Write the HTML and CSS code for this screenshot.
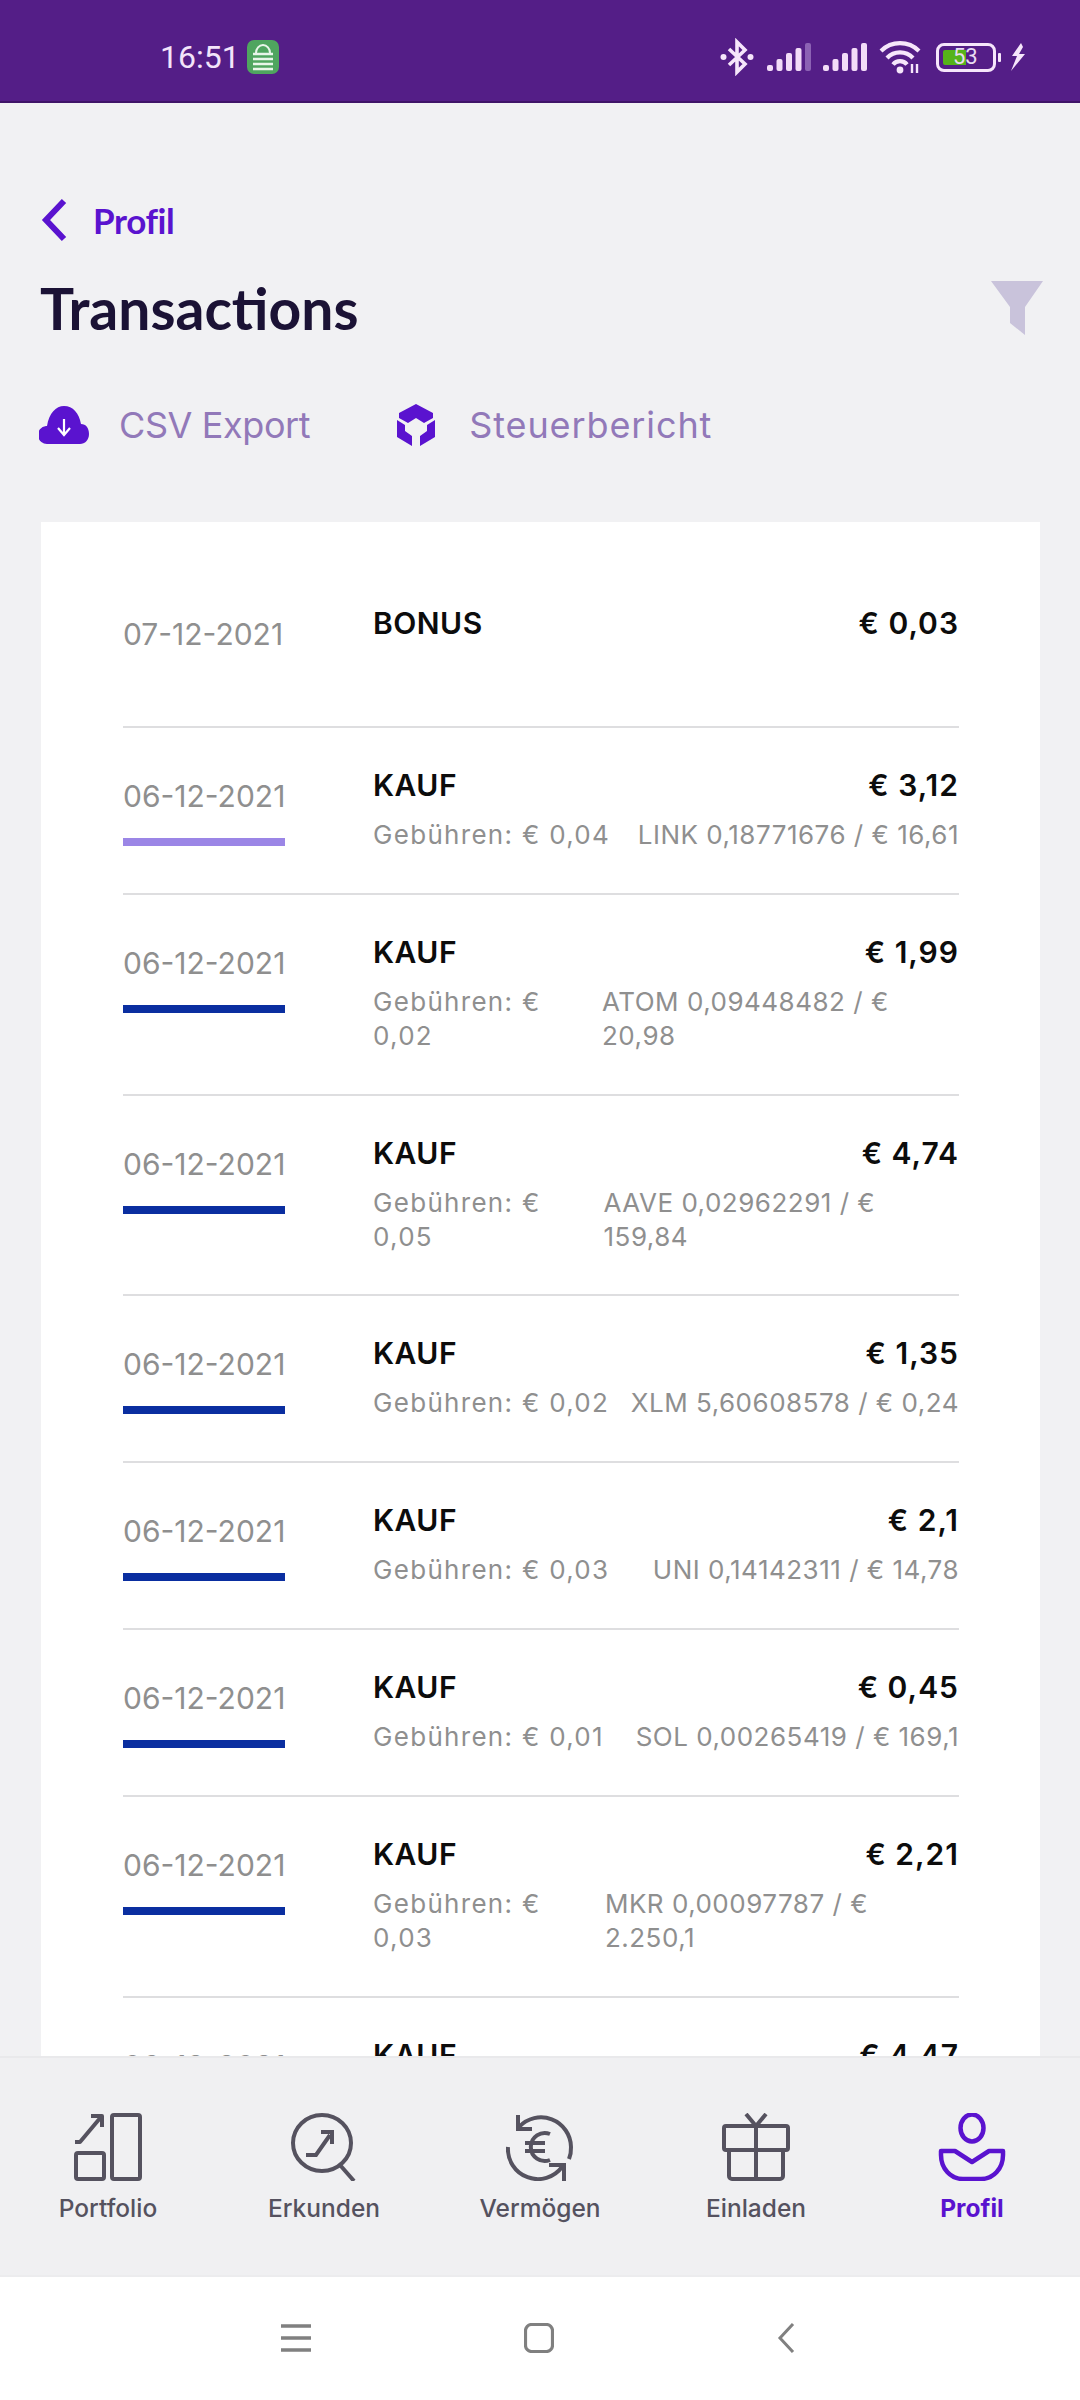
FILE: index.html
```html
<!DOCTYPE html>
<html lang="de">
<head>
<meta charset="utf-8">
<title>Transactions</title>
<link rel="stylesheet" href="styles.css">
</head>
<body>
<div class="phone">
  <header class="status">
    <div class="status-left">
      <span class="time">16:51</span>
      <svg class="vpn" viewBox="0 0 32 34"><rect width="32" height="34" rx="7" fill="#4fa55f"/><path d="M9 13a7 8 0 0 1 14 0" fill="none" stroke="#e8f5e9" stroke-width="2"/><path d="M6 14h20M6 19h20M6 24h20M6 29h20" stroke="#e8f5e9" stroke-width="2.6"/></svg>
    </div>
    <div class="status-right">
      <svg class="s-bt" viewBox="0 0 34 38"><path d="M9 11l16 15-8 8V4l8 8L9 27" fill="none" stroke="#f6e6fb" stroke-width="3.6"/><circle cx="3.5" cy="19" r="3" fill="#f6e6fb"/><circle cx="30.5" cy="19" r="3" fill="#f6e6fb"/></svg>
      <svg class="s-sig" viewBox="0 0 44 28"><g fill="#f3dcf8"><rect x="0" y="22" width="6" height="6" rx="2"/><rect x="9.500" y="16" width="6" height="12" rx="2"/><rect x="19" y="10" width="6" height="18" rx="2"/><rect x="28.500" y="5" width="6" height="23" rx="2"/><rect x="38" y="0" width="6" height="28" rx="2" fill="#8c62b4"/></g></svg>
      <svg class="s-sig" viewBox="0 0 44 28"><g fill="#f3dcf8"><rect x="0" y="22" width="6" height="6" rx="2"/><rect x="9.500" y="16" width="6" height="12" rx="2"/><rect x="19" y="10" width="6" height="18" rx="2"/><rect x="28.500" y="5" width="6" height="23" rx="2"/><rect x="38" y="0" width="6" height="28" rx="2"/></g></svg>
      <svg class="s-wifi" viewBox="0 0 42 34"><g fill="none" stroke="#f6e6fb" stroke-width="4.200"><path d="M2 11a27 27 0 0 1 38 0"/><path d="M8 18a18 18 0 0 1 26 0"/><path d="M14 24.500a9 9 0 0 1 14 0"/></g><circle cx="21" cy="30" r="3.400" fill="#f6e6fb"/><path d="M33 24v9M38 24v9" stroke="#f6e6fb" stroke-width="2.400"/></svg>
      <div class="battery">
        <div class="batt-body"><span class="batt-fill"></span><span class="batt-num">53</span></div>
        <span class="batt-nub"></span>
      </div>
      <svg class="s-bolt" viewBox="0 0 16 28"><path d="M11 0L2 13h5L1 28 15 11H9l4-7z" fill="#f6e6fb"/></svg>
    </div>
  </header>

  <main class="content">
    <a class="back">
      <svg class="back-icon" viewBox="0 0 28 44"><path d="M24 3L6 22l18 19" fill="none" stroke="#5a13cf" stroke-width="6"/></svg>
      <span>Profil</span>
    </a>
    <div class="title-row">
      <h1>Transactions</h1>
      <svg class="filter" viewBox="0 0 52 54"><path d="M0 0h52L34 26v28l-15-12V26z" fill="#c9c3db"/></svg>
    </div>
    <div class="actions">
      <a class="action action-csv">
        <svg class="i-cloud" viewBox="0 0 50 40"><path d="M9 39a9 9 0 0 1-2-18h1C10 8 17 1 25 1c9 0 15 7 17 18 5 0 8 4 8 10 0 6-4 10-9 10z" fill="#5a13cf"/><path d="M25 14v15M19 23l6 7 6-7" fill="none" stroke="#fff" stroke-width="2.200"/></svg>
        <span>CSV Export</span>
      </a>
      <a class="action action-tax">
        <svg class="i-box" viewBox="0 0 40 42"><path d="M20 0l17 9v5l-9 5-8-5-8 5-9-5V9z" fill="#5a13cf"/><path d="M1 16l8 5v6l7 5v10L1 33z M39 16l-8 5v6l-7 5v10l15-9z" fill="#5a13cf"/></svg>
        <span>Steuerbericht</span>
      </a>
    </div>

    <section class="card">
      <article class="row row-first">
        <div class="left"><div class="date">07-12-2021</div></div>
        <div class="right">
          <div class="top"><span class="type">BONUS</span><span class="amount">€ 0,03</span></div>
        </div>
      </article>
      <article class="row">
        <div class="left"><div class="date">06-12-2021</div><div class="bar bar-link"></div></div>
        <div class="right">
          <div class="top"><span class="type">KAUF</span><span class="amount">€ 3,12</span></div>
          <div class="sub"><span class="fee">Gebühren: € 0,04</span><span>LINK 0,18771676 / € 16,61</span></div>
        </div>
      </article>
      <article class="row">
        <div class="left"><div class="date">06-12-2021</div><div class="bar"></div></div>
        <div class="right">
          <div class="top"><span class="type">KAUF</span><span class="amount">€ 1,99</span></div>
          <div class="sub"><span class="fee">Gebühren: € 0,02</span><span>ATOM 0,09448482 / € 20,98</span></div>
        </div>
      </article>
      <article class="row">
        <div class="left"><div class="date">06-12-2021</div><div class="bar"></div></div>
        <div class="right">
          <div class="top"><span class="type">KAUF</span><span class="amount">€ 4,74</span></div>
          <div class="sub"><span class="fee">Gebühren: € 0,05</span><span>AAVE 0,02962291 / € 159,84</span></div>
        </div>
      </article>
      <article class="row">
        <div class="left"><div class="date">06-12-2021</div><div class="bar"></div></div>
        <div class="right">
          <div class="top"><span class="type">KAUF</span><span class="amount">€ 1,35</span></div>
          <div class="sub"><span class="fee">Gebühren: € 0,02</span><span>XLM 5,60608578 / € 0,24</span></div>
        </div>
      </article>
      <article class="row">
        <div class="left"><div class="date">06-12-2021</div><div class="bar"></div></div>
        <div class="right">
          <div class="top"><span class="type">KAUF</span><span class="amount">€ 2,1</span></div>
          <div class="sub"><span class="fee">Gebühren: € 0,03</span><span>UNI 0,14142311 / € 14,78</span></div>
        </div>
      </article>
      <article class="row">
        <div class="left"><div class="date">06-12-2021</div><div class="bar"></div></div>
        <div class="right">
          <div class="top"><span class="type">KAUF</span><span class="amount">€ 0,45</span></div>
          <div class="sub"><span class="fee">Gebühren: € 0,01</span><span>SOL 0,00265419 / € 169,1</span></div>
        </div>
      </article>
      <article class="row">
        <div class="left"><div class="date">06-12-2021</div><div class="bar"></div></div>
        <div class="right">
          <div class="top"><span class="type">KAUF</span><span class="amount">€ 2,21</span></div>
          <div class="sub"><span class="fee">Gebühren: € 0,03</span><span>MKR 0,00097787 / € 2.250,1</span></div>
        </div>
      </article>
      <article class="row">
        <div class="left"><div class="date">06-12-2021</div><div class="bar"></div></div>
        <div class="right">
          <div class="top"><span class="type">KAUF</span><span class="amount">€ 4,47</span></div>
        </div>
      </article>
    </section>
  </main>

  <nav class="tabs">
    <a class="tab">
      <svg viewBox="0 0 68 68"><g fill="none" stroke="#55525f" stroke-width="4" stroke-linejoin="round"><rect x="38" y="2" width="28" height="64" rx="2"/><rect x="2" y="40" width="28" height="26" rx="2"/><path d="M1 29h5L27 4"/><path d="M17 3h11v11"/></g></svg>
      <span>Portfolio</span>
    </a>
    <a class="tab">
      <svg viewBox="0 0 68 68"><g fill="none" stroke="#55525f" stroke-width="4"><ellipse cx="32" cy="30" rx="29" ry="28"/><path d="M50 52l14 16"/><path d="M16 42h10l14-20"/><path d="M31 19h11v12"/></g></svg>
      <span>Erkunden</span>
    </a>
    <a class="tab">
      <svg viewBox="0 0 68 68"><g fill="none" stroke="#55525f" stroke-width="4"><path d="M13 14A30 30 0 0 1 65 34a30 30 0 0 1-2 12"/><path d="M12 2v14h14"/><path d="M56 54A30 30 0 0 1 2 34"/><path d="M58 68V52H43"/><path d="M44 21a14 14 0 1 0 0 26"/><path d="M19 30h20M19 38h20"/></g></svg>
      <span>Vermögen</span>
    </a>
    <a class="tab">
      <svg viewBox="0 0 68 68"><g fill="none" stroke="#55525f" stroke-width="4" stroke-linejoin="round"><rect x="2" y="13" width="64" height="24" rx="2"/><path d="M7 37v26a3 3 0 0 0 3 3h48a3 3 0 0 0 3-3V37"/><path d="M34 13v53"/><path d="M24 1l10 12L44 1"/></g></svg>
      <span>Einladen</span>
    </a>
    <a class="tab tab-active">
      <svg viewBox="0 0 68 68"><g fill="none" stroke="#5a13cf" stroke-width="4.500"><ellipse cx="34" cy="15" rx="11.500" ry="13.500"/><path d="M3 38h14l17 11 17-11h14v4c0 14-10 24-22 24H25C13 66 3 56 3 42z" stroke-linejoin="round"/></g></svg>
      <span>Profil</span>
    </a>
  </nav>

  <footer class="sysnav">
    <svg class="sys-menu" viewBox="0 0 30 28"><path d="M0 2h30M0 14h30M0 26h30" stroke="#808080" stroke-width="3.500"/></svg>
    <svg class="sys-home" viewBox="0 0 30 30"><rect x="1.500" y="1.500" width="27" height="27" rx="6" fill="none" stroke="#808080" stroke-width="3.200"/></svg>
    <svg class="sys-back" viewBox="0 0 18 30"><path d="M16 1L3 15l13 14" fill="none" stroke="#808080" stroke-width="3"/></svg>
  </footer>
</div>
</body>
</html>
```
FILE: styles.css
```css
* { box-sizing: border-box; }
html, body { margin: 0; padding: 0; }
body { width: 1080px; height: 2400px; overflow: hidden; background: #f1f1f3; font-family: Inter, "Liberation Sans", sans-serif; }
.phone { width: 1080px; height: 2400px; display: flex; flex-direction: column; overflow: hidden; }

.status { height: 103px; flex: none; background: #541e87; border-bottom: 2px solid #3f1468; display: flex; justify-content: space-between; align-items: center; padding: 13px 54px 0 160px; color: #f3e4fa; }
.status-left { display: flex; align-items: center; gap: 7px; }
.time { font-family: Roboto, sans-serif; font-size: 32px; font-weight: 400; }
.vpn { width: 32px; height: 34px; display: block; }
.status-right { display: flex; align-items: center; }
.s-bt { width: 34px; height: 38px; margin-right: 13px; }
.s-sig { width: 44px; height: 28px; margin-right: 12px; }
.s-wifi { width: 42px; height: 34px; margin-right: 15px; }
.battery { display: flex; align-items: center; margin-right: 9px; }
.batt-body { width: 60px; height: 29px; border: 3.500px solid #f6e6fb; border-radius: 8px; position: relative; padding: 4px; }
.batt-fill { display: block; width: 23px; height: 100%; background: #56b31a; border-radius: 2px 0 0 2px; }
.batt-num { position: absolute; left: 14px; top: -2px; font-family: Roboto, sans-serif; font-size: 22px; line-height: 26px; color: #e8dcf2; font-weight: 400; }
.batt-nub { width: 3px; height: 9px; margin-left: 2px; background: #f6e6fb; border-radius: 1px; }
.s-bolt { width: 16px; height: 28px; }

.content { flex: 1; min-height: 0; overflow: hidden; padding: 96px 40px 0 40px; }
.back { display: flex; align-items: center; gap: 25px; color: #5a13cf; font-family: Lato, sans-serif; font-size: 35px; font-weight: 700; height: 42px; letter-spacing: -.4px; }
.back-icon { width: 28px; height: 44px; flex: none; }
.title-row { display: flex; justify-content: space-between; align-items: center; margin-top: 39px; height: 56px; }
h1 { margin: 0; font-family: Lato, sans-serif; font-size: 57px; font-weight: 700; color: #1b1235; line-height: 56px; }
.filter { width: 52px; height: 54px; margin-right: -3px; }
.actions { display: flex; align-items: center; margin-top: 66px; height: 46px; gap: 86px; }
.action { display: flex; align-items: center; color: #9279b9; font-size: 36px; font-weight: 400; }
.action-csv { gap: 30px; letter-spacing: -.4px; }
.action-tax { gap: 33px; letter-spacing: .9px; }
.i-cloud { width: 50px; height: 40px; margin-left: -1px; }
.i-box { width: 40px; height: 42px; }

.card { margin: 74px 0 0 1px; background: #fff; padding: 0 81px 0 82px; }
.row { display: flex; height: 167px; padding-top: 39px; border-bottom: 2px solid #dedee0; }
.row:has(.sub) { height: auto; padding-bottom: 40.800px; }
.row-first { height: 206px; padding-top: 83px; }
.left { width: 162px; flex: none; margin-right: 88px; }
.date { font-size: 30px; font-weight: 400; color: #8f8f8f; line-height: 36px; margin-top: 11px; white-space: nowrap; }
.bar { height: 8px; background: #0a2ea0; margin-top: 24px; }
.bar-link { background: #9b86e6; }
.right { flex: 1; min-width: 0; }
.top { display: flex; justify-content: space-between; line-height: 36px; color: #0c0c0c; font-weight: 600; font-size: 30px; letter-spacing: .5px; }
.amount { letter-spacing: 1px; }
.sub { display: flex; justify-content: space-between; margin-top: 15px; font-size: 26px; line-height: 34px; color: #8f8f8f; letter-spacing: .5px; }
.fee { letter-spacing: 1.300px; }

.tabs { height: 219px; flex: none; background: #f0f0f2; border-top: 2px solid #e9e9eb; display: flex; padding-top: 55px; }
.tab { width: 216px; display: flex; flex-direction: column; align-items: center; color: #55525f; font-size: 24.500px; font-weight: 500; line-height: 32px; gap: 11px; }
.tab svg { width: 68px; height: 68px; display: block; }
.tab-active { color: #5a13cf; font-weight: 700; }

.sysnav { height: 125px; flex: none; background: #fff; border-top: 2px solid #ececee; display: flex; align-items: center; padding-bottom: 2px; position: relative; }
.sys-menu { width: 30px; height: 28px; margin-left: 281px; }
.sys-home { width: 30px; height: 30px; margin-left: 213px; }
.sys-back { width: 18px; height: 30px; margin-left: 223px; }
```
